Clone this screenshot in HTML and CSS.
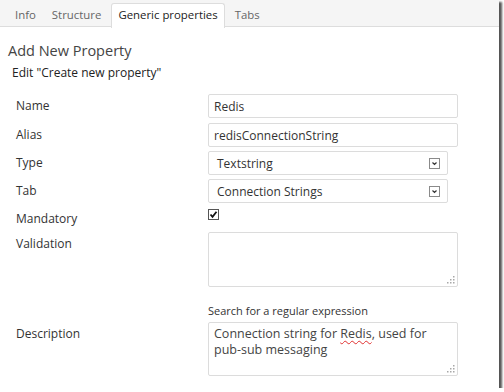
FILE: index.html
```html
<!DOCTYPE html>
<html lang="en">
<head>
    <meta charset="UTF-8">
    <title>Generic properties</title>
    <link rel="stylesheet" href="styles.css">
</head>
<body>
    <div class="page">
        <!-- Tabs -->
        <ul class="tabs">
            <li>Info</li>
            <li>Structure</li>
            <li class="active">Generic properties</li>
            <li>Tabs</li>
        </ul>

        <div class="content">
            <h2 class="title">Add New Property</h2>
            <div class="subtitle">Edit "Create new property"</div>

            <div class="form">
                <div class="row">
                    <label>Name</label>
                    <input type="text" class="field" value="Redis">
                </div>
                <div class="row">
                    <label>Alias</label>
                    <input type="text" class="field" value="redisConnectionString">
                </div>
                <div class="row">
                    <label>Type</label>
                    <div class="select">
                        <span>Textstring</span>
                        <svg class="arrow" width="11" height="11" viewBox="0 0 11 11"><rect x="0.5" y="0.5" width="10" height="10" fill="#fff" stroke="#8a8a8a"/><path d="M3.5 4.5 L5.5 6.5 L7.5 4.5" fill="none" stroke="#333" stroke-width="1.2"/></svg>
                    </div>
                </div>
                <div class="row">
                    <label>Tab</label>
                    <div class="select">
                        <span>Connection Strings</span>
                        <svg class="arrow" width="11" height="11" viewBox="0 0 11 11"><rect x="0.5" y="0.5" width="10" height="10" fill="#fff" stroke="#8a8a8a"/><path d="M3.5 4.5 L5.5 6.5 L7.5 4.5" fill="none" stroke="#333" stroke-width="1.2"/></svg>
                    </div>
                </div>
                <div class="row">
                    <label>Mandatory</label>
                    <svg class="check" width="11" height="11" viewBox="0 0 11 11"><rect x="0.5" y="0.5" width="10" height="10" fill="#fff" stroke="#555"/><path d="M2.5 5.5 L4.5 7.8 L8.5 2.8" fill="none" stroke="#111" stroke-width="1.8"/></svg>
                </div>
                <div class="row row-validation">
                    <label>Validation</label>
                    <div class="area area-small">
                        <svg class="grip" width="8" height="8" viewBox="0 0 8 8"><g fill="#a8a8a8"><rect x="6" y="0" width="1.5" height="1.5"/><rect x="3" y="3" width="1.5" height="1.5"/><rect x="6" y="3" width="1.5" height="1.5"/><rect x="0" y="6" width="1.5" height="1.5"/><rect x="3" y="6" width="1.5" height="1.5"/><rect x="6" y="6" width="1.5" height="1.5"/></g></svg>
                    </div>
                </div>
                <div class="row row-help">
                    <label></label>
                    <div class="help">Search for a regular expression</div>
                </div>
                <div class="row">
                    <label>Description</label>
                    <div class="area">
                        <p class="area-text">Connection string for <span class="typo">Redis</span>, used for pub-sub messaging</p>
                        <svg class="grip" width="8" height="8" viewBox="0 0 8 8"><g fill="#a8a8a8"><rect x="6" y="0" width="1.5" height="1.5"/><rect x="3" y="3" width="1.5" height="1.5"/><rect x="6" y="3" width="1.5" height="1.5"/><rect x="0" y="6" width="1.5" height="1.5"/><rect x="3" y="6" width="1.5" height="1.5"/><rect x="6" y="6" width="1.5" height="1.5"/></g></svg>
                    </div>
                </div>
            </div>
        </div>
    </div>
</body>
</html>
```

FILE: styles.css
```css
body {
    margin: 0;
    background-color: white;
    font-family: "Open Sans", "Liberation Sans", sans-serif;
    color: #333;
}
.page {
    width: 499px;
    height: 388px;
    background-color: white;
    box-shadow: 3px 2px 2px #555;
    overflow: hidden;
}
.tabs {
    list-style: none;
    margin: 0;
    padding: 3px 0 0 9px;
    height: 23px;
    display: flex;
    gap: 4px;
    background-color: #f5f5f5;
    border-bottom: 1px solid #dddddd;
}
.tabs li {
    padding: 0 6px;
    font-size: 11.4px;
    line-height: 23px;
    color: #666;
}
.tabs li.active {
    background-color: white;
    color: #222;
    border: 1px solid #dddddd;
    border-bottom: none;
    border-radius: 3px 3px 0 0;
    height: 24px;
    line-height: 22px;
}
.content {
    padding: 0 0 0 8px;
}
.title {
    margin: 14px 0 0 0;
    font-size: 14.5px;
    font-weight: normal;
    color: #444;
    line-height: 20px;
}
.subtitle {
    margin: 4px 0 0 4px;
    font-size: 12px;
    color: #222;
    line-height: 16px;
}
.form {
    margin-top: 13px;
    padding-left: 8px;
}
.row {
    display: flex;
    align-items: flex-start;
    margin-bottom: 4px;
}
.row label {
    width: 192px;
    flex-shrink: 0;
    font-size: 12px;
    line-height: 24px;
    color: #333;
}
.field {
    width: 250px;
    height: 24px;
    box-sizing: border-box;
    border: 1px solid #dcdcdc;
    border-radius: 2px;
    padding: 0 5px;
    font-family: inherit;
    font-size: 12px;
    color: #333;
    margin: 0;
}
.row:first-child {
    margin-bottom: 5px;
}
.select {
    width: 240px;
    height: 24px;
    box-sizing: border-box;
    border: 1px solid #dcdcdc;
    border-radius: 2px;
    padding: 0 7px 0 8px;
    display: flex;
    align-items: center;
    justify-content: space-between;
    font-size: 12px;
    color: #333;
}
.check {
    margin-top: 2px;
}
.row-validation {
    margin-top: -3px;
}
.area {
    width: 250px;
    height: 54px;
    box-sizing: border-box;
    border: 1px solid #dcdcdc;
    border-radius: 2px;
    padding: 3px 5px;
    position: relative;
}
.area-text {
    margin: 0;
    font-size: 12.5px;
    line-height: 16px;
    color: #444;
}
.grip {
    position: absolute;
    right: 2px;
    bottom: 2px;
}
.area-small {
    height: 55px;
}
.row-help {
    margin: 16px 0 3px 0;
}
.row-help label {
    line-height: 16px;
}
.help {
    font-size: 11px;
    line-height: 16px;
    color: #333;
}
.typo {
    text-decoration: underline wavy #e03030;
    text-decoration-thickness: 1px;
    text-underline-offset: 2px;
}
```
